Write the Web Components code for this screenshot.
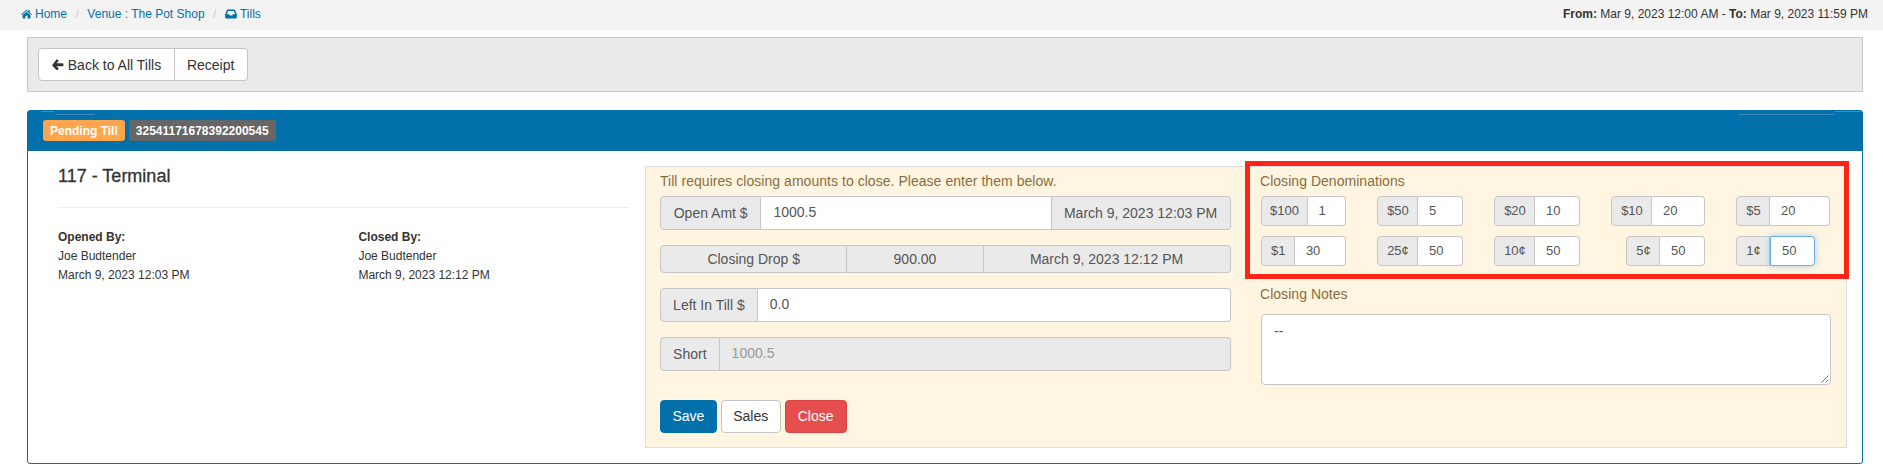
<!DOCTYPE html>
<html>
<head>
<meta charset="utf-8">
<title>Tills</title>
<style>
  html, body { margin: 0; padding: 0; background: #fff; }
  body { font-family: "Liberation Sans", Arial, sans-serif; font-size: 14px; color: #333; overflow: hidden; }
</style>
</head>
<body>
<till-page>
  <crumb-bar>
    <crumb-link slot="crumbs" icon="home">Home</crumb-link>
    <crumb-link slot="crumbs">Venue : The Pot Shop</crumb-link>
    <crumb-link slot="crumbs" icon="inbox">Tills</crumb-link>
    <span slot="range"><b>From:</b> Mar 9, 2023 12:00 AM - <b>To:</b> Mar 9, 2023 11:59 PM</span>
  </crumb-bar>

  <tool-bar>
    <tool-button icon="back">Back to All Tills</tool-button>
    <tool-button>Receipt</tool-button>
  </tool-bar>

  <till-panel>
    <till-badge slot="head" color="#ffa64d">Pending Till</till-badge>
    <till-badge slot="head" color="#666">32541171678392200545</till-badge>

    <till-info>
      <span slot="title">117 - Terminal</span>
      <till-person label="Opened By:" name="Joe Budtender" date="March 9, 2023 12:03 PM"></till-person>
      <till-person label="Closed By:" name="Joe Budtender" date="March 9, 2023 12:12 PM"></till-person>
    </till-info>

    <closing-box>
      <box-note slot="left">Till requires closing amounts to close. Please enter them below.</box-note>
      <input-row slot="left">
        <till-cell kind="addon" style="width:101.4px">Open Amt $</till-cell>
        <till-cell kind="input" style="flex:1">1000.5</till-cell>
        <till-cell kind="addon" style="width:179px">March 9, 2023 12:03 PM</till-cell>
      </input-row>
      <input-row slot="left" short>
        <till-cell kind="addon" style="width:187.4px">Closing Drop $</till-cell>
        <till-cell kind="addon" style="width:136.2px">900.00</till-cell>
        <till-cell kind="addon" style="flex:1">March 9, 2023 12:12 PM</till-cell>
      </input-row>
      <input-row slot="left">
        <till-cell kind="addon" style="width:97.8px">Left In Till $</till-cell>
        <till-cell kind="input" style="flex:1">0.0</till-cell>
      </input-row>
      <input-row slot="left">
        <till-cell kind="addon" style="width:59.6px">Short</till-cell>
        <till-cell kind="disabled" style="flex:1">1000.5</till-cell>
      </input-row>
      <button-row slot="left">
        <till-button look="primary">Save</till-button>
        <till-button>Sales</till-button>
        <till-button look="danger">Close</till-button>
      </button-row>

      <mark-box slot="right"></mark-box>
      <box-note slot="right">Closing Denominations</box-note>
      <denom-grid slot="right">
        <denom-input label="$100" value="1" label-width="47"></denom-input>
        <denom-input label="$50" value="5" label-width="41"></denom-input>
        <denom-input label="$20" value="10" label-width="41"></denom-input>
        <denom-input label="$10" value="20" label-width="41"></denom-input>
        <denom-input label="$5" value="20" label-width="34"></denom-input>
        <denom-input label="$1" value="30" label-width="34.4"></denom-input>
        <denom-input label="25¢" value="50" label-width="41"></denom-input>
        <denom-input label="10¢" value="50" label-width="41"></denom-input>
        <denom-input label="5¢" value="50" label-width="34" style="width:79px;justify-self:end"></denom-input>
        <denom-input label="1¢" value="50" label-width="34" focused style="width:79px"></denom-input>
      </denom-grid>
      <box-note slot="right" class="notes-label">Closing Notes</box-note>
      <note-area slot="right">--</note-area>
    </closing-box>
  </till-panel>
</till-page>

<script>
"use strict";

const ICONS = {
  home: `<svg viewBox="0 0 20 18" width="11" height="10" fill="currentColor"><path d="M10 1.2 13.4 4V2.2h2.7v4L19.8 9.400l-1 1.200L10 3.300 1.200 10.600l-1-1.200z"/><path d="M10 4.900 17 10.700V16.400a.7.7 0 0 1-.7.7H12V12.400H8V17.100H3.700A.7.7 0 0 1 3 16.400V10.700z"/></svg>`,
  inbox: `<svg viewBox="0 0 20 16" width="12" height="10" fill="currentColor"><path fill-rule="evenodd" d="M4.300 .5H15.700a1 1 0 0 1 .9.600L19.700 8.300V14a1.500 1.500 0 0 1-1.500 1.500H1.800A1.500 1.500 0 0 1 .3 14V8.300L3.400 1.100a1 1 0 0 1 .9-.6zM5.300 2.800 3 8.400H6.900L8 10.700H12L13.100 8.400H17L14.700 2.800z"/></svg>`,
  back: `<svg viewBox="0 0 16 14" width="12" height="11" fill="currentColor"><path d="M7.300.4 8.500 1.600a1 1 0 0 1 0 1.400L6 5.300H14a1.300 1.300 0 0 1 1.300 1.300V8.100A1.300 1.300 0 0 1 14 9.400H6L8.500 11.700a1 1 0 0 1 0 1.400L7.300 14.300a1 1 0 0 1-1.400 0L.7 8.900a1.100 1.100 0 0 1 0-1.600L5.900.4a1 1 0 0 1 1.400 0z"/></svg>`
};

// small helper, every element has its markup + style in an open shadow root
function shadowOf(host, html) {
  const root = host.attachShadow({ mode: "open" });
  root.innerHTML = html;
  return root;
}

class TillPage extends HTMLElement {
  constructor() {
    super();
    shadowOf(this, `<style>
      :host { display: block; width: 1883px; height: 476px; font-family: "Liberation Sans", Arial, sans-serif; }
    </style><slot></slot>`);
  }
}

class CrumbBar extends HTMLElement {
  constructor() {
    super();
    shadowOf(this, `<style>
      :host { display: flex; justify-content: space-between; height: 30px; padding: 0 15px 3px 21px; box-sizing: border-box; background: #f3f3f3; align-items: center; font-size: 12px; color: #333; }
      nav { display: flex; align-items: center; }
    </style><nav><slot name="crumbs"></slot></nav><div><slot name="range"></slot></div>`);
  }
}

class CrumbLink extends HTMLElement {
  constructor() {
    super();
    const icon = ICONS[this.getAttribute("icon")] || "";
    shadowOf(this, `<style>
      :host { display: inline-flex; align-items: center; color: #0271ab; font-size: 12px; white-space: nowrap; }
      .sep { color: #ccc; margin: 0 8.500px; }
      :host(:first-child) .sep { display: none; }
      svg { margin-right: 3px; display: block; }
    </style><span class="sep">/</span>${icon}<slot></slot>`);
  }
}

class ToolBar extends HTMLElement {
  constructor() {
    super();
    shadowOf(this, `<style>
      :host { display: flex; margin: 7px 20px 18px 27px; height: 55px; box-sizing: border-box; padding: 10px 10.4px; background: #eaeaea; border: 1px solid #c8c8c8; }
    </style><slot></slot>`);
  }
}

class ToolButton extends HTMLElement {
  constructor() {
    super();
    const icon = ICONS[this.getAttribute("icon")] || "";
    shadowOf(this, `<style>
      :host { display: inline-flex; align-items: center; height: 33px; box-sizing: border-box; padding: 0 12.400px; background: #fff; border: 1px solid #c4c4c4; color: #333; font-size: 14px; white-space: nowrap; }
      :host(:first-child) { border-radius: 4px 0 0 4px; }
      :host(:last-child) { border-radius: 0 4px 4px 0; border-left: 0; }
      svg { margin-right: 4px; display: block; }
    </style>${icon}<slot></slot>`);
  }
}

class TillPanel extends HTMLElement {
  constructor() {
    super();
    // the pale streaks along the top of the blue header are in the reference too
    const s = "linear-gradient(#3c8fbc,#3c8fbc)";
    shadowOf(this, `<style>
      :host { display: block; margin: 0 20px 0 27px; border: 1px solid #0271ab; border-radius: 3px; background: #fff; }
      header { display: flex; gap: 4px; height: 40px; box-sizing: border-box; padding: 9px 15px;
        background: ${s} 13px 0/13px 1px no-repeat, ${s} 28px 3px/38px 1px no-repeat,
          ${s} right 1px top 0/26px 1px no-repeat, ${s} right 28px top 3px/95px 1px no-repeat, #0271ab; }
      .body { display: flex; padding: 15px 15.300px 14.700px 30px; gap: 16px; align-items: flex-start; }
    </style><header><slot name="head"></slot></header><div class="body"><slot></slot></div>`);
  }
}

class TillBadge extends HTMLElement {
  constructor() {
    super();
    shadowOf(this, `<style>
      :host { display: inline-flex; align-items: center; height: 21px; padding: 0 7px; border-radius: 3px; color: #fff; font-size: 12px; font-weight: bold; white-space: nowrap; background: ${this.getAttribute("color")}; }
    </style><slot></slot>`);
  }
}

class TillInfo extends HTMLElement {
  constructor() {
    super();
    shadowOf(this, `<style>
      :host { display: block; width: 570.500px; flex: none; }
      h2 { margin: 0; height: 41.500px; box-sizing: border-box; font-size: 18px; line-height: 20px; font-weight: normal; color: #333; -webkit-text-stroke: .3px #333; border-bottom: 1px solid #eee; }
      .people { display: grid; grid-template-columns: 300.400px 1fr; padding-top: 20.500px; }
    </style><h2><slot name="title"></slot></h2><div class="people"><slot></slot></div>`);
  }
}

class TillPerson extends HTMLElement {
  constructor() {
    super();
    shadowOf(this, `<style>
      :host { display: block; font-size: 12px; line-height: 19px; color: #333; }
      b { display: block; }
    </style><b>${this.getAttribute("label")}</b><div>${this.getAttribute("name")}</div><div>${this.getAttribute("date")}</div>`);
  }
}

class ClosingBox extends HTMLElement {
  constructor() {
    super();
    shadowOf(this, `<style>
      :host { display: flex; flex: 1; box-sizing: border-box; gap: 29.400px; padding: 4px 15px 14.300px 14.500px; background: #fff5e1; border: 1px solid #dedede; }
      .left { width: 570.600px; flex: none; display: flex; flex-direction: column; }
      .right { flex: 1; position: relative; }
    </style><div class="left"><slot name="left"></slot></div><div class="right"><slot name="right"></slot></div>`);
  }
}

class BoxNote extends HTMLElement {
  constructor() {
    super();
    shadowOf(this, `<style>
      :host { display: block; height: 20px; line-height: 20px; margin-bottom: 5px; font-size: 14px; letter-spacing: .04px; color: #8a6d3b; }
      :host(.notes-label) { margin: 18.600px 0 9.700px; }
    </style><slot></slot>`);
  }
}

class InputRow extends HTMLElement {
  constructor() {
    super();
    shadowOf(this, `<style>
      :host { display: flex; height: 33.500px; margin-bottom: 15.700px; font-size: 14px; }
      :host([short]) { height: 27.400px; }
    </style><slot></slot>`);
  }
}

class TillCell extends HTMLElement {
  constructor() {
    super();
    shadowOf(this, `<style>
      :host { display: flex; align-items: center; box-sizing: border-box; border: 1px solid #c6c6c6; border-left-width: 0; white-space: nowrap; color: #555; }
      :host(:first-child) { border-left-width: 1px; border-radius: 4px 0 0 4px; }
      :host(:last-child) { border-radius: 0 4px 4px 0; }
      :host([kind=addon]) { justify-content: center; background: #eaeaea; }
      :host([kind=input]) { background: #fff; padding: 0 0 2px 12px; }
      :host([kind=disabled]) { background: #eaeaea; color: #999; padding: 0 0 2px 12px; }
    </style><slot></slot>`);
  }
}

class ButtonRow extends HTMLElement {
  constructor() {
    super();
    shadowOf(this, `<style>
      :host { display: flex; gap: 3.800px; margin-top: 13.300px; }
    </style><slot></slot>`);
  }
}

class TillButton extends HTMLElement {
  constructor() {
    super();
    shadowOf(this, `<style>
      :host { display: inline-flex; align-items: center; height: 33px; box-sizing: border-box; padding: 0 11.500px; border: 1px solid #c4c4c4; border-radius: 4px; background: #fff; color: #333; font-size: 14px; }
      :host([look=primary]) { background: #0271ab; border-color: #0271ab; color: #fff; }
      :host([look=danger]) { background: #e64d4d; border-color: #d94444; color: #fff; padding: 0 12.200px; }
    </style><slot></slot>`);
  }
}

class DenomGrid extends HTMLElement {
  constructor() {
    super();
    shadowOf(this, `<style>
      :host { display: grid; grid-template-columns: 85.500px 86px 86px 94px 94px; column-gap: 31px; row-gap: 10.700px; margin-left: 1px; }
    </style><slot></slot>`);
  }
}

class DenomInput extends HTMLElement {
  constructor() {
    super();
    const w = this.getAttribute("label-width");
    shadowOf(this, `<style>
      :host { display: flex; height: 29.500px; font-size: 13px; color: #555; }
      span { display: flex; align-items: center; box-sizing: border-box; }
      .label { flex: none; justify-content: center; background: #eaeaea; border: 1px solid #c6c6c6; border-radius: 4px 0 0 4px; }
      .value { flex: 1; padding-left: 10.500px; background: #fff; border: 1px solid #c6c6c6; border-left: 0; border-radius: 0 4px 4px 0; }
      :host([focused]) .value { border: 1px solid #66afe9; box-shadow: 0 0 6px rgba(102,175,233,.6); }
    </style><span class="label" style="width:${w}px">${this.getAttribute("label")}</span><span class="value">${this.getAttribute("value")}</span>`);
  }
}

class NoteArea extends HTMLElement {
  constructor() {
    super();
    shadowOf(this, `<style>
      :host { display: block; position: relative; height: 70.700px; margin-left: 1px; box-sizing: border-box; padding: 6px 12px; background: #fff; border: 1px solid #c6c6c6; border-radius: 4px; font-size: 14px; line-height: 20px; color: #555; }
      svg { position: absolute; right: 1px; bottom: 1px; }
    </style><slot></slot><svg width="8" height="8" viewBox="0 0 8 8" fill="none" stroke="#555" stroke-width=".8"><path d="M.5 7.500 7.500 .5M4.500 7.500 7.500 4.500"/></svg>`);
  }
}

// the red annotation drawn over the denominations
class MarkBox extends HTMLElement {
  constructor() {
    super();
    shadowOf(this, `<style>
      :host { position: absolute; left: -15px; top: -10px; width: 604px; height: 118px; box-sizing: border-box; border: 5px solid #ff2418; pointer-events: none; }
    </style>`);
  }
}

customElements.define("till-page", TillPage);
customElements.define("crumb-bar", CrumbBar);
customElements.define("crumb-link", CrumbLink);
customElements.define("tool-bar", ToolBar);
customElements.define("tool-button", ToolButton);
customElements.define("till-panel", TillPanel);
customElements.define("till-badge", TillBadge);
customElements.define("till-info", TillInfo);
customElements.define("till-person", TillPerson);
customElements.define("closing-box", ClosingBox);
customElements.define("box-note", BoxNote);
customElements.define("input-row", InputRow);
customElements.define("till-cell", TillCell);
customElements.define("button-row", ButtonRow);
customElements.define("till-button", TillButton);
customElements.define("denom-grid", DenomGrid);
customElements.define("denom-input", DenomInput);
customElements.define("note-area", NoteArea);
customElements.define("mark-box", MarkBox);
</script>
</body>
</html>
